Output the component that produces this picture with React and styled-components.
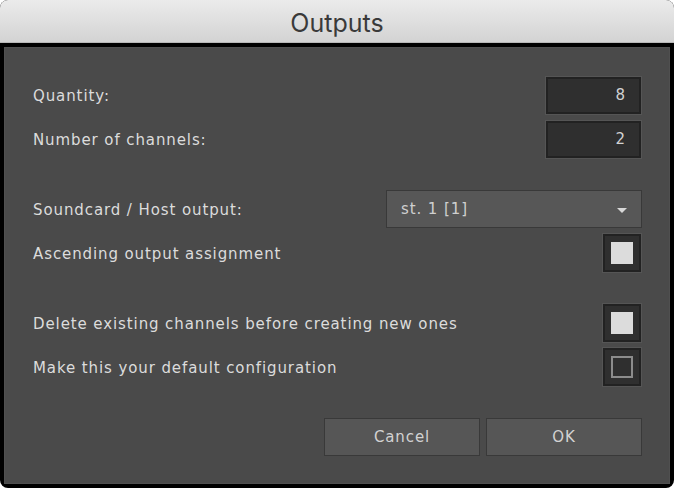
import React, { useState } from "react";
import styled, { createGlobalStyle } from "styled-components";

const GlobalStyle = createGlobalStyle`
  html, body {
    margin: 0;
    padding: 0;
    background: #ffffff;
  }
`;

const Window = styled.div`
  width: 674px;
  height: 488px;
  box-sizing: border-box;
  background: #000;
  border-radius: 8px;
  overflow: hidden;
  display: flex;
  flex-direction: column;
`;

const TitleBar = styled.div`
  height: 43px;
  flex: none;
  display: flex;
  align-items: center;
  justify-content: center;
  background: linear-gradient(#ebebeb, #d3d3d3);
  border-bottom: 1px solid #b8b8b8;
  box-sizing: border-box;
  font-family: Inter, "Liberation Sans", sans-serif;
  font-size: 25px;
  color: #3a3a3a;
  padding-top: 3px;
`;

const Panel = styled.div`
  flex: 1;
  margin: 4px;
  background: #4a4a4a;
  border: 1px solid #505050;
  padding: 27px 27px 25px 28px;
  display: flex;
  flex-direction: column;
  gap: 30px;
  font-family: "DejaVu Sans", sans-serif;
  font-size: 15px;
  letter-spacing: 0.9px;
  color: #dcdcdc;
`;

const Section = styled.div`
  display: flex;
  flex-direction: column;
  gap: 4px;
`;

const Row = styled.div`
  height: 40px;
  display: flex;
  align-items: center;
  justify-content: space-between;
`;

const Label = styled.span`
  white-space: nowrap;
  padding-top: 1px;
`;

const Field = styled.div`
  width: 97px;
  height: 39px;
  box-sizing: border-box;
  border: 1px solid #555;
  background: #222;
  padding: 2px;
  display: flex;
`;

const FieldInner = styled.div`
  flex: 1;
  background: #2f2f2f;
  display: flex;
  align-items: center;
  justify-content: flex-end;
  padding-right: 13px;
  color: #d2d2d2;
`;

const Select = styled.div`
  width: 256px;
  height: 38px;
  box-sizing: border-box;
  border: 1px solid #393939;
  background: #575757;
  display: flex;
  align-items: center;
  justify-content: space-between;
  padding: 0 14px;
  color: #cfcfcf;
`;

const Caret = styled.span`
  width: 0;
  height: 0;
  border-left: 5px solid transparent;
  border-right: 5px solid transparent;
  border-top: 5px solid #d8d8d8;
  margin-top: 2px;
`;

const CheckFrame = styled.div`
  width: 40px;
  height: 40px;
  box-sizing: border-box;
  border: 1px solid #555;
  background: #222;
  padding: 2px;
  display: flex;
  cursor: pointer;
`;

const CheckWell = styled.div`
  flex: 1;
  background: #2f2f2f;
  display: flex;
  align-items: center;
  justify-content: center;
`;

const CheckMark = styled.div`
  width: 22px;
  height: 22px;
  box-sizing: border-box;
  background: ${(p) => (p.$on ? "#dcdcdc" : "transparent")};
  border: 2px solid ${(p) => (p.$on ? "#dcdcdc" : "#8c8c8c")};
`;

const Buttons = styled.div`
  height: 40px;
  display: flex;
  align-items: center;
  justify-content: flex-end;
  gap: 6px;
`;

const Button = styled.button`
  width: 156px;
  height: 38px;
  border: 1px solid #393939;
  background: #565656;
  color: #d2d2d2;
  font-family: "DejaVu Sans", sans-serif;
  font-size: 15px;
  letter-spacing: 0.9px;
  padding: 0;
  cursor: pointer;
`;

function Checkbox({ checked, onToggle }) {
  return (
    <CheckFrame onClick={onToggle}>
      <CheckWell>
        <CheckMark $on={checked} />
      </CheckWell>
    </CheckFrame>
  );
}

export default function App() {
  const [ascending, setAscending] = useState(true);
  const [deleteExisting, setDeleteExisting] = useState(true);
  const [makeDefault, setMakeDefault] = useState(false);

  return (
    <>
      <GlobalStyle />
      <Window>
        <TitleBar>Outputs</TitleBar>
        <Panel>
          <Section>
            <Row>
              <Label>Quantity:</Label>
              <Field>
                <FieldInner>8</FieldInner>
              </Field>
            </Row>
            <Row>
              <Label>Number of channels:</Label>
              <Field>
                <FieldInner>2</FieldInner>
              </Field>
            </Row>
          </Section>
          <Section>
            <Row>
              <Label>Soundcard / Host output:</Label>
              <Select>
                <span>st. 1 [1]</span>
                <Caret />
              </Select>
            </Row>
            <Row>
              <Label>Ascending output assignment</Label>
              <Checkbox checked={ascending} onToggle={() => setAscending(!ascending)} />
            </Row>
          </Section>
          <Section>
            <Row>
              <Label>Delete existing channels before creating new ones</Label>
              <Checkbox
                checked={deleteExisting}
                onToggle={() => setDeleteExisting(!deleteExisting)}
              />
            </Row>
            <Row>
              <Label>Make this your default configuration</Label>
              <Checkbox checked={makeDefault} onToggle={() => setMakeDefault(!makeDefault)} />
            </Row>
          </Section>
          <Buttons>
            <Button>Cancel</Button>
            <Button>OK</Button>
          </Buttons>
        </Panel>
      </Window>
    </>
  );
}
